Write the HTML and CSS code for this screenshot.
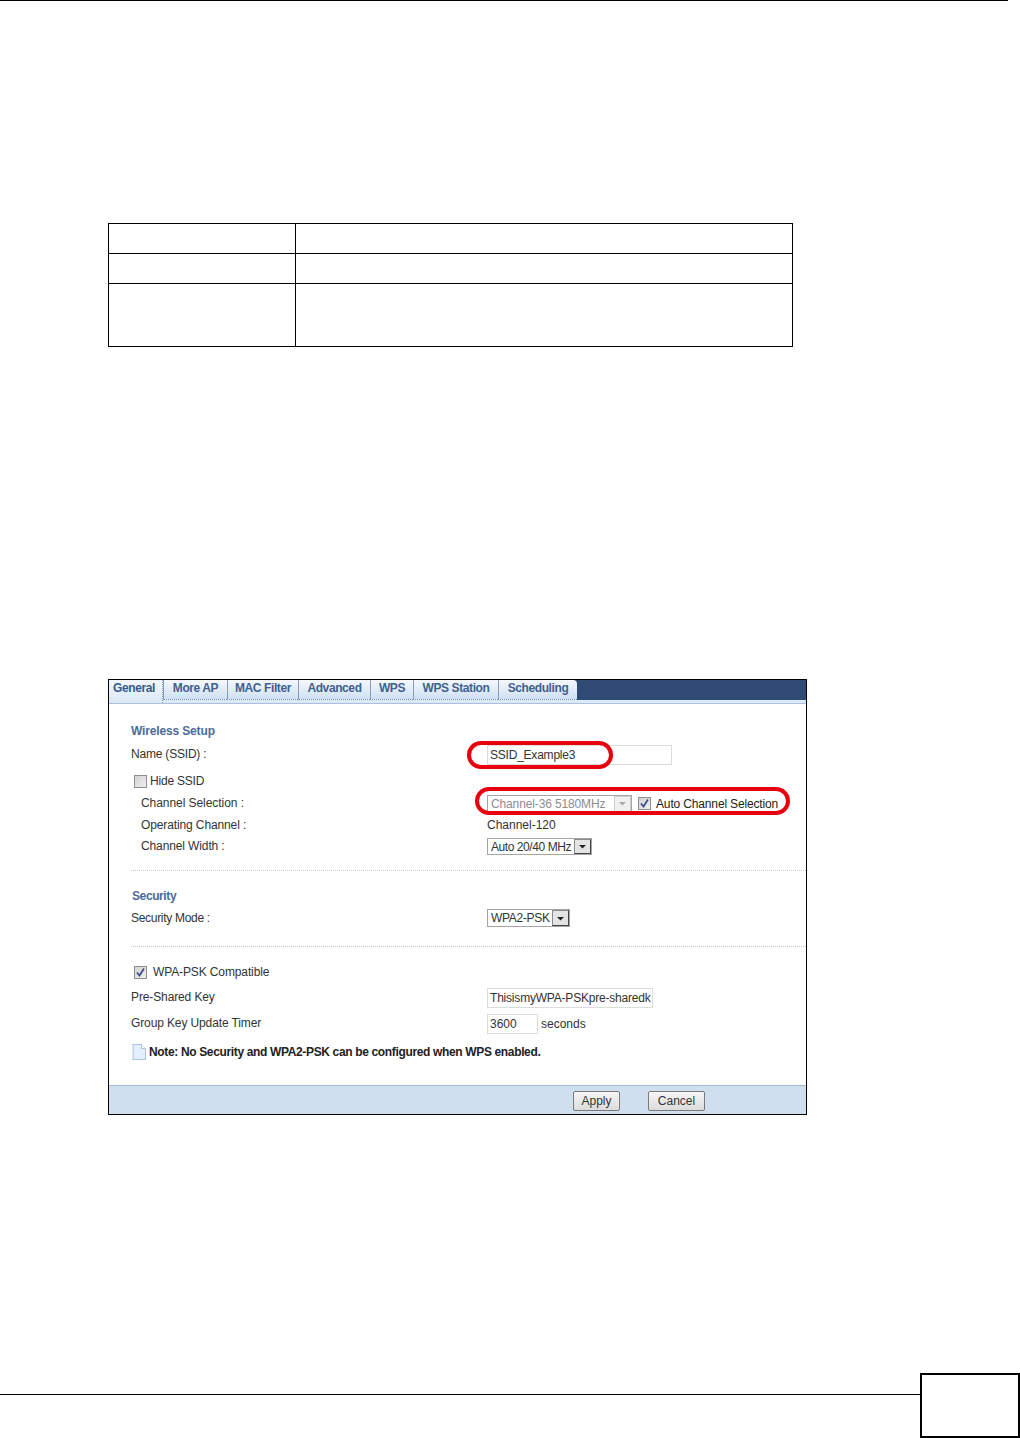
FILE: index.html
```html
<!DOCTYPE html>
<html lang="en">
<head>
<meta charset="utf-8">
<title>Wireless Setup</title>
<link rel="stylesheet" href="styles.css">
</head>
<body>
<div class="page">
  <div class="top-rule"></div>
  <table class="doc-table">
    <tr class="r30"><td class="c1"></td><td></td></tr>
    <tr class="r30"><td class="c1"></td><td></td></tr>
    <tr class="r63"><td class="c1"></td><td></td></tr>
  </table>

  <div class="shot">
    <div class="tabs">
      <div class="tab active t1">General</div>
      <div class="tab t2">More AP</div>
      <div class="tab t3">MAC Filter</div>
      <div class="tab t4">Advanced</div>
      <div class="tab t5">WPS</div>
      <div class="tab t6">WPS Station</div>
      <div class="tab t7">Scheduling</div>
    </div>
    <div class="form">
      <div class="row title">Wireless Setup</div>
      <div class="row h26"><span class="label lift tight">Name (SSID) :</span><span class="field f-ssid">SSID_Example3</span></div>
      <div class="row h25 check-row hide">
        <span class="check"></span><span class="tight">Hide SSID</span>
      </div>
      <div class="row h21 in"><span class="label lift near">Channel Selection :</span>
        <span class="select sel-disabled"><span class="sel-text">Channel-36 5180MHz</span><span class="sel-btn off"><svg viewBox="0 0 9 5" width="9" height="5"><path d="M1 1h7L4.500 4.500z" fill="#a9a9a9"/></svg></span></span>
        <span class="check checked auto"><svg viewBox="0 0 13 13" width="13" height="13"><path d="M3 6.500l2.500 3L10 2.500" fill="none" stroke="#3a4a8c" stroke-width="1.700"/></svg></span><span class="auto-label">Auto Channel Selection</span>
      </div>
      <div class="row in"><span class="label">Operating Channel :</span><span class="plain">Channel-120</span></div>
      <div class="row h21 in"><span class="label lift">Channel Width :</span>
        <span class="select sel-width"><span class="sel-text narrow">Auto 20/40 MHz</span><span class="sel-btn"><svg viewBox="0 0 9 5" width="9" height="5"><path d="M1 1h7L4.500 4.500z" fill="#222"/></svg></span></span>
      </div>
      <div class="divider d1"></div>
      <div class="row title sec">Security</div>
      <div class="row"><span class="label tighter">Security Mode :</span>
        <span class="select sel-mode"><span class="sel-text">WPA2-PSK</span><span class="sel-btn"><svg viewBox="0 0 9 5" width="9" height="5"><path d="M1 1h7L4.500 4.500z" fill="#222"/></svg></span></span>
      </div>
      <div class="divider d2"></div>
      <div class="row m14 check-row wpa">
        <span class="check checked"><svg viewBox="0 0 13 13" width="13" height="13"><path d="M3 6.500l2.500 3L10 2.500" fill="none" stroke="#3a4a8c" stroke-width="1.700"/></svg></span><span>WPA-PSK Compatible</span>
      </div>
      <div class="row m3"><span class="label">Pre-Shared Key</span><span class="field f-psk">ThisismyWPA-PSKpre-sharedk</span></div>
      <div class="row m4"><span class="label">Group Key Update Timer</span><span class="field f-timer">3600</span><span class="unit">seconds</span></div>
      <div class="row m7 note">
        <svg class="note-icon" viewBox="0 0 14 16" width="14" height="16"><path d="M1 .5h8.500l4 4v11H1z" fill="#e3f0fb" stroke="#a6c6e2"/><path d="M9.500.5v4h4" fill="#fff" stroke="#a6c6e2"/></svg>
        <span>Note: No Security and WPA2-PSK can be configured when WPS enabled.</span>
      </div>
    </div>
    <div class="actions">
      <span class="btn b-apply">Apply</span>
      <span class="btn b-cancel">Cancel</span>
    </div>
    <div class="oval o1"></div>
    <div class="oval o2"></div>
  </div>

  <div class="page-foot">
    <div class="foot-rule"></div>
    <div class="page-box"></div>
  </div>
</div>
</body>
</html>
```
FILE: styles.css
```css
* { box-sizing: border-box; }
html, body { margin: 0; padding: 0; background: #fff; }
body { font: 12px/14px "Liberation Sans", Arial, sans-serif; color: #333; }
.page { width: 1020px; height: 1438px; display: flex; flex-direction: column; overflow: hidden; }
.top-rule { width: 1008px; height: 1px; background: #000; flex: none; }

.doc-table { margin: 222px 0 0 108px; width: 685px; height: 124px; border-collapse: collapse; table-layout: fixed; flex: none; }
.doc-table td { border: 1px solid #000; padding: 0; }
.doc-table .c1 { width: 187px; }
.r30 { height: 30px; }
.r63 { height: 63px; }

.shot { position: relative; flex: none; margin: 332px 0 0 108px; width: 699px; height: 436px; border: 1px solid #000; display: flex; flex-direction: column; background: #fff; }

.tabs { height: 24px; flex: none; display: flex; background: linear-gradient(#2f4a75 0, #2f4a75 20px, #dbe8f5 20px, #dbe8f5 23px, #a9c1dc 23px); }
.tab { height: 20px; display: flex; align-items: center; justify-content: center; padding-bottom: 3px; font-weight: bold; letter-spacing: -.4px; color: #41618f; background: linear-gradient(#f4f8fd, #cfe0f2); border-left: 1px solid #8b9db5; border-bottom: 1px dotted #6f8cb0; flex: none; }
.tab.active { height: 23px; padding: 0 3px 8px 0; color: #355b8c; background: linear-gradient(#f2f7fc, #dbe8f5); border-left: 0; border-bottom: 0; border-right: 1px dotted #8ba3c0; }
.t1 { width: 54px; }
.t2 { width: 64px; }
.t3 { width: 71px; }
.t4 { width: 72px; }
.t5 { width: 43px; }
.t6 { width: 85px; }
.t7 { width: 79px; border-top-right-radius: 4px; }

.form { flex: 1; display: flex; flex-direction: column; padding: 16px 0 0 22px; }
.row { height: 22px; flex: none; display: flex; align-items: center; letter-spacing: -.12px; }
.h26 { height: 26px; }
.h25 { height: 25px; }
.h21 { height: 21px; }
.m14 { margin-top: 14px; }
.m3 { margin-top: 3px; }
.m4 { margin-top: 4px; }
.m7 { margin-top: 7px; }
.title { font-weight: bold; color: #4a6b97; letter-spacing: -.15px; }
.sec { margin: 14px 0 0 1px; letter-spacing: -.4px; }
.label { width: 356px; flex: none; }
.lift { margin-bottom: 2px; }
.tight { letter-spacing: -.2px; }
.tighter { letter-spacing: -.3px; }
.near { letter-spacing: -.06px; }
.plain { letter-spacing: 0; }
.in { padding-left: 10px; }
.in .label { width: 346px; }

.field { flex: none; height: 20px; border: 1px solid #dcdcdc; background: #fff; display: flex; align-items: center; padding-left: 2px; overflow: hidden; white-space: nowrap; }
.f-ssid { width: 185px; letter-spacing: -.22px; }
.f-psk { width: 166px; letter-spacing: -.2px; margin-top: 2px; }
.f-timer { width: 51px; letter-spacing: 0; margin-top: 2px; }
.unit { margin: 2px 0 0 3px; letter-spacing: 0; }

.check-row { padding-left: 3px; }
.hide { padding-top: 1px; }
.check { width: 13px; height: 13px; flex: none; border: 1px solid #8f8f8f; background: linear-gradient(135deg, #d2d2d2, #f0f0f0); display: block; position: relative; }
.check svg { display: block; margin: -1px 0 0 -1px; }
.check-row .check { margin-right: 3px; }
.wpa .check { margin-right: 6px; }

.select { flex: none; height: 18px; border: 1px solid #a5a5a5; display: flex; align-items: center; justify-content: space-between; padding-left: 3px; background: #fff; overflow: hidden; letter-spacing: -.3px; }
.sel-text { white-space: nowrap; }
.narrow { letter-spacing: -.43px; }
.sel-btn { width: 17px; height: 16px; flex: none; display: flex; align-items: center; justify-content: center; background: #e4e4e4; border: 1px solid #8a8a8a; border-right-color: #444; border-bottom-color: #444; }
.sel-disabled { width: 145px; color: #8d8d8d; letter-spacing: -.13px; }
.sel-btn.off { background: #f0f0f0; border-color: #cfcfcf; }
.sel-width { width: 105px; height: 17px; }
.sel-width .sel-btn { height: 15px; }
.sel-mode { width: 83px; }
.auto { margin-left: 6px; }
.auto-label { margin-left: 5px; color: #222; letter-spacing: -.15px; }

.divider { flex: none; border-top: 1px dotted #c8c8c8; height: 0; }
.d1 { margin-top: 13px; }
.d2 { margin-top: 17px; }

.note { font-weight: bold; color: #222; letter-spacing: -.35px; }
.note-icon { margin: 0 3px 0 1px; flex: none; }

.actions { height: 29px; flex: none; background: #d0dfee; border-top: 1px solid #a3bbd6; display: flex; align-items: flex-start; padding: 5px 0 0 464px; }
.btn { height: 20px; display: flex; align-items: center; justify-content: center; border: 1px solid #7a7a7a; border-radius: 2px; background: linear-gradient(#f6f6f6, #dcdcdc); color: #333; }
.b-apply { width: 47px; }
.b-cancel { width: 57px; margin-left: 28px; }

.oval { position: absolute; border: 4px solid #e8000f; border-radius: 16px; }
.o1 { left: 358px; top: 61px; width: 146px; height: 28px; }
.o2 { left: 366px; top: 107px; width: 315px; height: 28px; }

.page-foot { flex: none; margin-top: 258px; display: flex; align-items: flex-start; }
.foot-rule { width: 920px; height: 1px; background: #000; margin-top: 21px; flex: none; }
.page-box { width: 100px; height: 65px; border: 2px solid #000; flex: none; }
```
